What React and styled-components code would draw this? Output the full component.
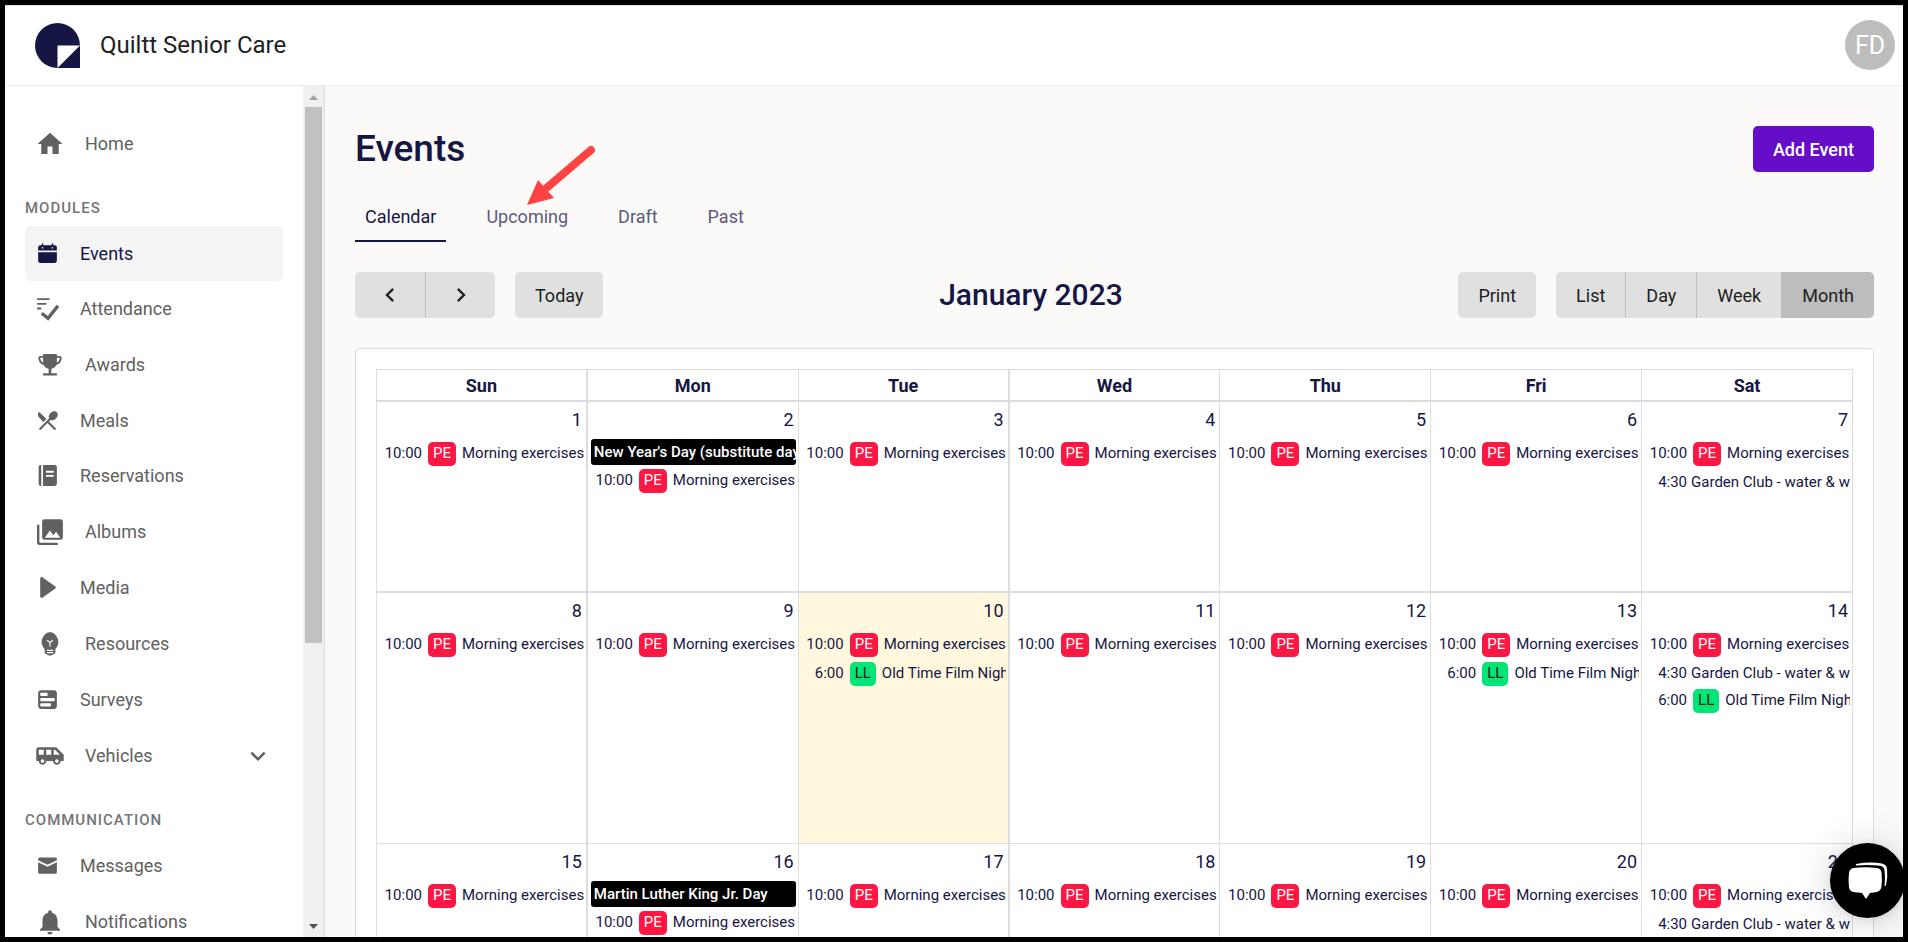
import React from 'react';
import styled, { createGlobalStyle } from 'styled-components';
import {
    MdHome,
    MdRestaurantMenu,
    MdNotifications,
    MdAirportShuttle,
    MdExpandMore,
    MdChevronLeft,
    MdChevronRight,
} from 'react-icons/md';

const GlobalStyle = createGlobalStyle`
    *, *::before, *::after {
        box-sizing: border-box;
    }
    body {
        margin: 0;
        font-family: Roboto, 'Liberation Sans', sans-serif;
        color: #161644;
        background-color: #fbfaf8;
    }
    button {
        font-family: inherit;
        border: none;
        cursor: pointer;
    }
    a {
        color: inherit;
        text-decoration: none;
    }
`;

/* ---------- Page shell ---------- */

const Frame = styled.div`
    height: 100vh;
    display: flex;
    flex-direction: column;
    border: 5px solid #000;
    overflow: hidden;
`;

const Header = styled.header`
    flex: none;
    height: 81px;
    display: flex;
    align-items: center;
    gap: 20px;
    padding: 0 8px 1px 30px;
    background-color: #fff;
    border-top: 1px solid #ddd;
    border-bottom: 1px solid #eee;
`;

const Brand = styled.span`
    flex: 1;
    font-size: 24px;
    font-weight: 400;
    color: #212121;
`;

const Avatar = styled.button`
    width: 50px;
    height: 50px;
    padding: 0;
    border-radius: 50%;
    background-color: #bdbdbd;
    color: #fff;
    font-size: 25px;
`;

const Body = styled.div`
    flex: 1;
    min-height: 0;
    display: flex;
`;

/* ---------- Sidebar ---------- */

const Sidebar = styled.aside`
    flex: none;
    width: 320px;
    display: flex;
    background-color: #fff;
    border-right: 1px solid #ddd;
`;

const SideNav = styled.nav`
    flex: 1;
    overflow: hidden;
    padding: 29px 20px 0;
`;

const SectionLabel = styled.h2`
    margin: 26px 0 8px;
    font-size: 15px;
    line-height: 20px;
    font-weight: 500;
    letter-spacing: 1px;
    text-transform: uppercase;
    color: #757575;
`;

const NavItem = styled.a`
    height: ${(props) => (props.$large ? 57 : 55)}px;
    display: flex;
    align-items: center;
    gap: 20px;
    padding: 0 10px;
    border-radius: 5px;
    font-size: 18px;
    font-weight: 400;
    color: ${(props) => (props.$active ? '#161644' : '#616161')};
    background-color: ${(props) => (props.$active ? '#f4f4f4' : 'transparent')};

    > svg:first-child {
        flex: none;
        width: ${(props) => (props.$large ? 30 : 25)}px;
        height: ${(props) => (props.$large ? 30 : 25)}px;
    }
`;

const NavText = styled.span`
    flex: 1;
`;

const ScrollTrack = styled.div`
    flex: none;
    width: 21px;
    display: flex;
    flex-direction: column;
    align-items: center;
    background-color: #f0f0f0;
`;

const ScrollThumb = styled.div`
    flex: 0 0 63%;
    width: 17px;
    background-color: #c1c1c1;
`;

const ScrollArrow = styled.svg`
    flex: none;
    width: 21px;
    height: 21px;
    fill: ${(props) => (props.$down ? '#505050' : '#a3a3a3')};
    margin-top: ${(props) => (props.$down ? 'auto' : '0')};
`;

/* ---------- Main column ---------- */

const Main = styled.main`
    flex: 1;
    min-width: 0;
    overflow: hidden;
    padding: 40px 29px 0 30px;
`;

const TitleRow = styled.div`
    display: flex;
    align-items: center;
    justify-content: space-between;
`;

const PageTitle = styled.h1`
    margin: 0;
    font-size: 37px;
    line-height: 46px;
    font-weight: 500;
`;

const AddButton = styled.button`
    height: 46px;
    padding: 0 20px;
    border-radius: 5px;
    background-color: #660dc8;
    color: #fff;
    font-size: 18px;
    font-weight: 500;
`;

const Tabs = styled.nav`
    display: flex;
    gap: 30px;
    margin-top: 20px;
`;

const Tab = styled.a`
    position: relative;
    height: 50px;
    padding: 0 10px;
    font-size: 18px;
    line-height: 50px;
    color: ${(props) => (props.$active ? '#161644' : '#5c5b7c')};
    border-bottom: 2px solid ${(props) => (props.$active ? '#161644' : 'transparent')};
`;

const Pointer = styled.svg`
    position: absolute;
    left: 50px;
    bottom: 33px;
    width: 72px;
    height: 64px;
`;

const Toolbar = styled.div`
    display: flex;
    align-items: center;
    justify-content: space-between;
    margin: 30px 0;
`;

const ToolGroup = styled.div`
    display: flex;
    align-items: center;
    gap: 20px;
`;

const ButtonGroup = styled.div`
    display: flex;
    border-radius: 5px;
    overflow: hidden;
`;

const ToolButton = styled.button`
    height: 46px;
    padding: 0 20px;
    display: flex;
    align-items: center;
    border-radius: 5px;
    background-color: #e0e0e0;
    color: #212121;
    font-size: 18px;
    font-weight: 400;

    ${ButtonGroup} & {
        border-radius: 0;
    }
    ${ButtonGroup} & + & {
        border-left: 1px solid #bdbdbd;
    }
    &[aria-pressed='true'] {
        background-color: #bdbdbd;
    }
`;

const ArrowButton = styled(ToolButton)`
    width: 70px;
    justify-content: center;
    padding: 0;

    svg {
        width: 28px;
        height: 28px;
    }
`;

const MonthTitle = styled.h2`
    margin: 0;
    font-size: 30px;
    line-height: 46px;
    font-weight: 500;
`;

/* ---------- Calendar ---------- */

const Card = styled.section`
    padding: 20px;
    border: 1px solid #ddd;
    border-radius: 5px;
    background-color: #fff;
`;

const Calendar = styled.table`
    width: 100%;
    table-layout: fixed;
    border-spacing: 0;
    border-top: 1px solid #ddd;
    border-left: 1px solid #ddd;

    th, td {
        padding: 0;
        border-right: 1px solid #ddd;
        border-bottom: 1px solid #ddd;
    }
    th:nth-child(odd):nth-child(-n + 4),
    td:nth-child(odd):nth-child(-n + 4) {
        border-right-width: 2px;
    }
`;

const DayHeading = styled.th`
    &&& {
        height: 32px;
        border-bottom-width: 2px;
    }
    font-size: 18px;
    font-weight: 700;
`;

const DayCell = styled.td`
    &&& {
        height: ${(props) => (props.$tall ? 251 : 191)}px;
        border-bottom-width: ${(props) => (props.$tall ? 1 : 2)}px;
    }
    vertical-align: top;
    background-color: ${(props) => (props.$today ? '#fff8df' : 'transparent')};
`;

const DayNumber = styled.div`
    padding: 0 4px 2px 0;
    text-align: right;
    font-size: 18px;
    line-height: 35px;
`;

const EventList = styled.ul`
    list-style: none;
    margin: 0 2px 0 3px;
    padding: 0;
`;

const Holiday = styled.li`
    height: 26px;
    margin-bottom: 1px;
    padding: 0 3px;
    border-radius: 3px;
    background-color: #000;
    color: #fff;
    font-size: 15px;
    line-height: 26px;
    font-weight: 500;
    white-space: nowrap;
    overflow: hidden;
`;

const Event = styled.li`
    display: flex;
    gap: 4px;
    padding: 3px 0 2px 4px;
    overflow: hidden;
    white-space: nowrap;
    font-size: 15px;
    line-height: 22px;
`;

const Time = styled.time`
    flex: none;
    width: 38px;
    text-align: right;
`;

const Badge = styled.span`
    flex: none;
    height: 24px;
    margin: 0 2px;
    padding: 0 5px;
    border-radius: 5px;
    background-color: ${(props) => (props.$kind === 'PE' ? '#ff1744' : '#00e676')};
    color: ${(props) => (props.$kind === 'PE' ? '#fff' : '#212121')};
    font-size: 15px;
`;

const ChatButton = styled.button`
    position: fixed;
    right: 3px;
    bottom: 24px;
    width: 75px;
    height: 75px;
    padding: 0;
    border-radius: 50%;
    background-color: #000;
    box-shadow: 0 1px 8px rgba(0, 0, 0, 0.1), 0 3px 38px rgba(0, 0, 0, 0.18);

    svg {
        display: block;
    }
`;

/* ---------- Icons ---------- */

const Icon = ({ children, viewBox = '0 0 24 24' }) => (
    <svg viewBox={viewBox} fill="currentColor" aria-hidden="true">
        {children}
    </svg>
);

const CalendarIcon = () => (
    <Icon>
        <path d="M3 9V6a2 2 0 0 1 2-2h1.500V2.500h1.500V4h8V2.500h1.500V4H19a2 2 0 0 1 2 2v3z" />
        <path fill="#f4f4f4" d="M6.500 6h1.500v1.300H6.500zM16 6h1.500v1.300H16z" />
        <path d="M3 10.800h18V19a2 2 0 0 1-2 2H5a2 2 0 0 1-2-2z" />
    </Icon>
);

const AttendanceIcon = () => (
    <Icon>
        <path
            d="M2 3h12M2 7.500h9M2 12h4"
            stroke="currentColor"
            strokeWidth="1.700"
            fill="none"
        />
        <path
            d="M6.500 16.500l6 5L22 9.500"
            stroke="currentColor"
            strokeWidth="3.200"
            fill="none"
        />
    </Icon>
);

const TrophyIcon = () => (
    <Icon viewBox="-1.500 -1.700 27 27">
        <path d="M5.800 2h12.400v7.500c0 3-2.500 5.200-5 5.600v4.200h5v2H5.800v-2h5v-4.200c-2.500-.4-5-2.600-5-5.600z" />
        <path
            d="M7 4.500H3.500c-1 0-1.300.7-1.100 1.700C3 9.200 5 11 8 11.500M17 4.500h3.500c1 0 1.300.7 1.100 1.700C21 9.200 19 11 16 11.500"
            stroke="currentColor"
            strokeWidth="1.700"
            fill="none"
        />
    </Icon>
);

const BookIcon = () => (
    <Icon>
        <path d="M6 2v20H5a2 2 0 0 1-1.500-2V4A2 2 0 0 1 5 2z" />
        <path
            fillRule="evenodd"
            d="M7.700 2H19a2 2 0 0 1 2 2v16a2 2 0 0 1-2 2H7.700zM10.500 7.500v1.800H18V7.500zm0 4v1.800H18v-1.800z"
        />
    </Icon>
);

const AlbumsIcon = () => (
    <Icon>
        <path d="M1.600 6.200h1.900v13.600c0 .5.300.8.800.8h13.900v1.800H3.500a1.900 1.900 0 0 1-1.900-1.900z" />
        <path
            fillRule="evenodd"
            d="M7.600 1.800h12.800a1.900 1.900 0 0 1 1.900 1.900v12.600a1.900 1.900 0 0 1-1.900 1.900H7.600a1.900 1.900 0 0 1-1.900-1.900V3.700a1.900 1.900 0 0 1 1.900-1.900zM7.800 16.500h12.400l-3.300-4.700-2.200 2.700-2.800-3.700z"
        />
    </Icon>
);

const PlayIcon = () => (
    <Icon>
        <path d="M5 3.500c0-1.500 1.200-2 2.400-1.200l11.800 8.400c1.100.8 1.100 1.800 0 2.600L7.400 21.700C6.200 22.500 5 22 5 20.500z" />
    </Icon>
);

const BulbIcon = () => (
    <Icon viewBox="-2 -1.500 28 28">
        <path d="M12 1.200a9.500 9.500 0 0 1 5 16v4l-3 1.500-2 .8-2-.8-3-1.500v-4a9.500 9.500 0 0 1 5-16z" />
        <path
            d="M9.300 9l2.700 2 2.700-2M12 10.500v4.500M9 18.500h6M9 20.500h6"
            stroke="#fff"
            strokeWidth="1.100"
            fill="none"
        />
    </Icon>
);

const SurveyIcon = () => (
    <Icon>
        <path
            fillRule="evenodd"
            d="M6 3h12a3 3 0 0 1 3 3v12a3 3 0 0 1-3 3H6a3 3 0 0 1-3-3V6a3 3 0 0 1 3-3zM5.800 5.500a.8.800 0 0 0-.8.800v1.600c0 .4.400.8.800.8H12V5.500zM5.800 10.500a.8.800 0 0 0-.8.800v1.500c0 .4.400.8.800.8h12.400c.4 0 .8-.4.800-.8v-1.500a.8.800 0 0 0-.8-.8zM5.800 15.500a.8.800 0 0 0-.8.800v1.500c0 .4.400.8.800.8h8.700c.4 0 .8-.4.800-.8v-1.500a.8.800 0 0 0-.8-.8z"
        />
    </Icon>
);

const MailIcon = () => (
    <Icon>
        <path d="M4.500 4.200h15A1.500 1.500 0 0 1 21 5.700v1.200l-9 4.300-9-4.300V5.700a1.500 1.500 0 0 1 1.500-1.500z" />
        <path d="M3 8.800l9 4.400 9-4.400v9.700a1.500 1.500 0 0 1-1.500 1.500h-15A1.500 1.500 0 0 1 3 18.500z" />
    </Icon>
);

const Logo = () => (
    <svg width="45" height="45" viewBox="0 0 45 45" role="img" aria-label="Quiltt">
        <path d="M22.500 0A22.500 22.500 0 0 1 45 22.500V45H22.500a22.500 22.500 0 0 1 0-45z" fill="#161644" />
        <path d="M22.500 22.500H45L22.500 45z" fill="#fff" />
    </svg>
);

/* ---------- Data ---------- */

const modules = [
    { label: 'Events', icon: CalendarIcon, active: true },
    { label: 'Attendance', icon: AttendanceIcon },
    { label: 'Awards', icon: TrophyIcon, large: true },
    { label: 'Meals', icon: MdRestaurantMenu },
    { label: 'Reservations', icon: BookIcon },
    { label: 'Albums', icon: AlbumsIcon, large: true },
    { label: 'Media', icon: PlayIcon },
    { label: 'Resources', icon: BulbIcon, large: true },
    { label: 'Surveys', icon: SurveyIcon },
    { label: 'Vehicles', icon: MdAirportShuttle, large: true, expandable: true },
];

const communication = [
    { label: 'Messages', icon: MailIcon },
    { label: 'Notifications', icon: MdNotifications, large: true },
];

const days = ['Sun', 'Mon', 'Tue', 'Wed', 'Thu', 'Fri', 'Sat'];
const views = ['List', 'Day', 'Week', 'Month'];

const exercises = { time: '10:00', kind: 'PE', title: 'Morning exercises' };
const garden = { time: '4:30', title: 'Garden Club - water & weed' };
const film = { time: '6:00', kind: 'LL', title: 'Old Time Film Night' };

const holidays = {
    2: "New Year's Day (substitute day)",
    16: 'Martin Luther King Jr. Day',
};

const extraEvents = {
    7: [garden],
    10: [film],
    13: [film],
    14: [garden, film],
    21: [garden],
};

const weeks = [1, 8, 15].map((start) => days.map((_, i) => start + i));
const TODAY = 10;

/* ---------- Components ---------- */

const SideLink = ({ item }) => (
    <NavItem href="#" $large={item.large} $active={item.active}>
        <item.icon />
        <NavText>{item.label}</NavText>
        {item.expandable && <MdExpandMore size={30} />}
    </NavItem>
);

const Day = ({ day, tall }) => (
    <DayCell $tall={tall} $today={day === TODAY}>
        <DayNumber>{day}</DayNumber>
        <EventList>
            {holidays[day] && <Holiday>{holidays[day]}</Holiday>}
            {[exercises, ...(extraEvents[day] || [])].map((event) => (
                <Event key={event.title}>
                    <Time>{event.time}</Time>
                    {event.kind && <Badge $kind={event.kind}>{event.kind}</Badge>}
                    <span>{event.title}</span>
                </Event>
            ))}
        </EventList>
    </DayCell>
);

const App = () => {
    return (
        <Frame>
            <GlobalStyle />
            <Header>
                <Logo />
                <Brand>Quiltt Senior Care</Brand>
                <Avatar>FD</Avatar>
            </Header>
            <Body>
                <Sidebar>
                    <SideNav>
                        <SideLink item={{ label: 'Home', icon: MdHome, large: true }} />
                        <SectionLabel>Modules</SectionLabel>
                        {modules.map((item) => (
                            <SideLink key={item.label} item={item} />
                        ))}
                        <SectionLabel>Communication</SectionLabel>
                        {communication.map((item) => (
                            <SideLink key={item.label} item={item} />
                        ))}
                    </SideNav>
                    <ScrollTrack>
                        <ScrollArrow viewBox="0 0 21 21">
                            <path d="M6 14l4.500-5 4.500 5z" />
                        </ScrollArrow>
                        <ScrollThumb />
                        <ScrollArrow $down viewBox="0 0 21 21">
                            <path d="M6 8l4.500 5L15 8z" />
                        </ScrollArrow>
                    </ScrollTrack>
                </Sidebar>
                <Main>
                    <TitleRow>
                        <PageTitle>Events</PageTitle>
                        <AddButton>Add Event</AddButton>
                    </TitleRow>
                    <Tabs>
                        <Tab href="#" $active>Calendar</Tab>
                        <Tab href="#">
                            Upcoming
                            <Pointer viewBox="0 0 72 64" aria-hidden="true">
                                <path d="M65 7L17 48" stroke="#ff4343" strokeWidth="8" strokeLinecap="round" />
                                <path d="M1 62l11-25 16 18z" fill="#ff4343" />
                            </Pointer>
                        </Tab>
                        <Tab href="#">Draft</Tab>
                        <Tab href="#">Past</Tab>
                    </Tabs>
                    <Toolbar>
                        <ToolGroup>
                            <ButtonGroup>
                                <ArrowButton aria-label="Previous month"><MdChevronLeft /></ArrowButton>
                                <ArrowButton aria-label="Next month"><MdChevronRight /></ArrowButton>
                            </ButtonGroup>
                            <ToolButton>Today</ToolButton>
                        </ToolGroup>
                        <MonthTitle>January 2023</MonthTitle>
                        <ToolGroup>
                            <ToolButton>Print</ToolButton>
                            <ButtonGroup>
                                {views.map((view) => (
                                    <ToolButton key={view} aria-pressed={view === 'Month'}>{view}</ToolButton>
                                ))}
                            </ButtonGroup>
                        </ToolGroup>
                    </Toolbar>
                    <Card>
                        <Calendar>
                            <thead>
                                <tr>
                                    {days.map((day) => (
                                        <DayHeading key={day} scope="col">{day}</DayHeading>
                                    ))}
                                </tr>
                            </thead>
                            <tbody>
                                {weeks.map((week, index) => (
                                    <tr key={week[0]}>
                                        {week.map((day) => (
                                            <Day key={day} day={day} tall={index > 0} />
                                        ))}
                                    </tr>
                                ))}
                            </tbody>
                        </Calendar>
                    </Card>
                </Main>
            </Body>
            <ChatButton aria-label="Open chat">
                <svg width="75" height="75" viewBox="0 0 75 75" aria-hidden="true">
                    <path d="M26 21q14-2.500 26-.5 4.500 1 5 5 1 9-1 17l-1.500.5q1-8 0-16-.5-3.500-4.500-4.200-12-1.500-24-.3z" fill="#fff" />
                    <path d="M23 25q12-1.500 24 0 4 .6 4.500 4.500.8 7 0 14-.5 4-4.500 5.500l-7 1-4 6-4-6-9-1q-3.500-1-4-5-1-7 0-14 .5-4 4-5z" fill="#fff" />
                </svg>
            </ChatButton>
        </Frame>
    );
};

export default App;
